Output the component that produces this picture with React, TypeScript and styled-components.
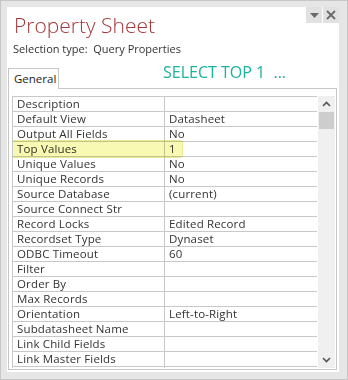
import React from "react";
import styled, { createGlobalStyle } from "styled-components";

const Global = createGlobalStyle`
  html, body { margin: 0; padding: 0; background: #e6e6e6; }
  * { box-sizing: border-box; }
`;

const Window = styled.div`
  width: 348px;
  height: 380px;
  border: 1px solid #c6c6c6;
  background: #e6e6e6;
  padding: 6px 8px 7px 6px;
  font-family: "Open Sans", "Liberation Sans", sans-serif;
  color: #333;
`;

const Panel = styled.div`
  height: 100%;
  background: #fff;
  display: flex;
  flex-direction: column;
`;

const Header = styled.div`
  display: flex;
  align-items: flex-start;
  justify-content: space-between;
  height: 61px;
`;

const TitleBlock = styled.div`
  display: flex;
  flex-direction: column;
  padding-left: 6px;
`;

const Title = styled.div`
  font-family: "Open Sans", "Liberation Sans", sans-serif;
  font-weight: 300;
  font-size: 21px;
  line-height: 30px;
  color: #a4373a;
  margin-top: 3px;
  margin-left: 1px;
`;

const Selection = styled.div`
  font-size: 11px;
  line-height: 14px;
  color: #333;
  margin-top: 2px;
  white-space: pre;
`;

const Buttons = styled.div`
  display: flex;
  gap: 1px;
`;

const WinButton = styled.div`
  width: 16px;
  height: 16px;
  background: #e1e1e1;
  display: flex;
  align-items: center;
  justify-content: center;
`;

const TabStrip = styled.div`
  display: flex;
  align-items: flex-end;
  height: 20px;
  margin-left: 1px;
  margin-right: 2px;
`;

const Tab = styled.div`
  width: 51px;
  height: 21px;
  border: 1px solid #c6c6c6;
  border-bottom: none;
  background: #fff;
  font-size: 11.5px;
  line-height: 19px;
  padding-left: 5px;
  color: #222;
  margin-bottom: -1px;
  position: relative;
  z-index: 1;
`;

const Annotation = styled.div`
  align-self: flex-start;
  margin-left: 104px;
  margin-top: -6px;
  font-size: 16px;
  line-height: 20px;
  color: #1ab39b;
  white-space: pre;
`;

const TabPanel = styled.div`
  flex: 1;
  margin: 0 2px 2px 1px;
  border: 1px solid #c6c6c6;
  padding: 7px 1px 1px 3px;
  display: flex;
  min-height: 0;
`;

const GridView = styled.div`
  width: 307px;
  height: 272px;
  overflow: hidden;
  border-left: 1px solid #c8c8c8;
  border-top: 1px solid #c8c8c8;
  position: relative;
`;

const Row = styled.div`
  display: grid;
  grid-template-columns: 152px 154px;
  height: 15px;
`;

const Cell = styled.div`
  border-right: 1px solid #c8c8c8;
  border-bottom: 1px solid #c8c8c8;
  font-size: 11.5px;
  letter-spacing: 0.15px;
  line-height: 14px;
  padding-left: 4px;
  color: #333;
  white-space: nowrap;
  overflow: hidden;
`;

const Highlight = styled.div`
  position: absolute;
  left: -3px;
  top: 43px;
  width: 173px;
  height: 18px;
  background: #f6f89a;
  border: 1px solid #e2e46e;
  border-radius: 3px;
  mix-blend-mode: multiply;
  opacity: 0.75;
  pointer-events: none;
`;

const ScrollBar = styled.div`
  width: 17px;
  height: 272px;
  margin-left: 1px;
  background: #f0f0f0;
  display: flex;
  flex-direction: column;
  align-items: center;
`;

const Arrow = styled.div`
  height: 16px;
  width: 17px;
  display: flex;
  align-items: center;
  justify-content: center;
`;

const Thumb = styled.div`
  width: 15px;
  height: 17px;
  background: #cdcdcd;
`;

const Track = styled.div`
  flex: 1;
`;

const rows: [string, string][] = [
  ["Description", ""],
  ["Default View", "Datasheet"],
  ["Output All Fields", "No"],
  ["Top Values", "1"],
  ["Unique Values", "No"],
  ["Unique Records", "No"],
  ["Source Database", "(current)"],
  ["Source Connect Str", ""],
  ["Record Locks", "Edited Record"],
  ["Recordset Type", "Dynaset"],
  ["ODBC Timeout", "60"],
  ["Filter", ""],
  ["Order By", ""],
  ["Max Records", ""],
  ["Orientation", "Left-to-Right"],
  ["Subdatasheet Name", ""],
  ["Link Child Fields", ""],
  ["Link Master Fields", ""],
  ["", ""],
];

export default function App() {
  return (
    <>
      <Global />
      <Window>
        <Panel>
          <Header>
            <TitleBlock>
              <Title>Property Sheet</Title>
              <Selection>{"Selection type:  Query Properties"}</Selection>
            </TitleBlock>
            <Buttons>
              <WinButton>
                <svg width="9" height="5" viewBox="0 0 9 5">
                  <path d="M0 0H9L4.5 5Z" fill="#6a6a6a" />
                </svg>
              </WinButton>
              <WinButton>
                <svg width="10" height="10" viewBox="0 0 10 10">
                  <path d="M1 1L9 9M9 1L1 9" stroke="#6a6a6a" strokeWidth="1.8" />
                </svg>
              </WinButton>
            </Buttons>
          </Header>
          <TabStrip>
            <Tab>General</Tab>
            <Annotation>{"SELECT TOP 1  ..."}</Annotation>
          </TabStrip>
          <TabPanel>
            <GridView>
              {rows.map(([k, v], i) => (
                <Row key={i}>
                  <Cell>{k}</Cell>
                  <Cell>{v}</Cell>
                </Row>
              ))}
              <Highlight />
            </GridView>
            <ScrollBar>
              <Arrow>
                <svg width="9" height="6" viewBox="0 0 9 6">
                  <path d="M1 5L4.5 1.5L8 5" stroke="#555" strokeWidth="1.6" fill="none" />
                </svg>
              </Arrow>
              <Thumb />
              <Track />
              <Arrow>
                <svg width="9" height="6" viewBox="0 0 9 6">
                  <path d="M1 1L4.5 4.5L8 1" stroke="#555" strokeWidth="1.6" fill="none" />
                </svg>
              </Arrow>
            </ScrollBar>
          </TabPanel>
        </Panel>
      </Window>
    </>
  );
}
